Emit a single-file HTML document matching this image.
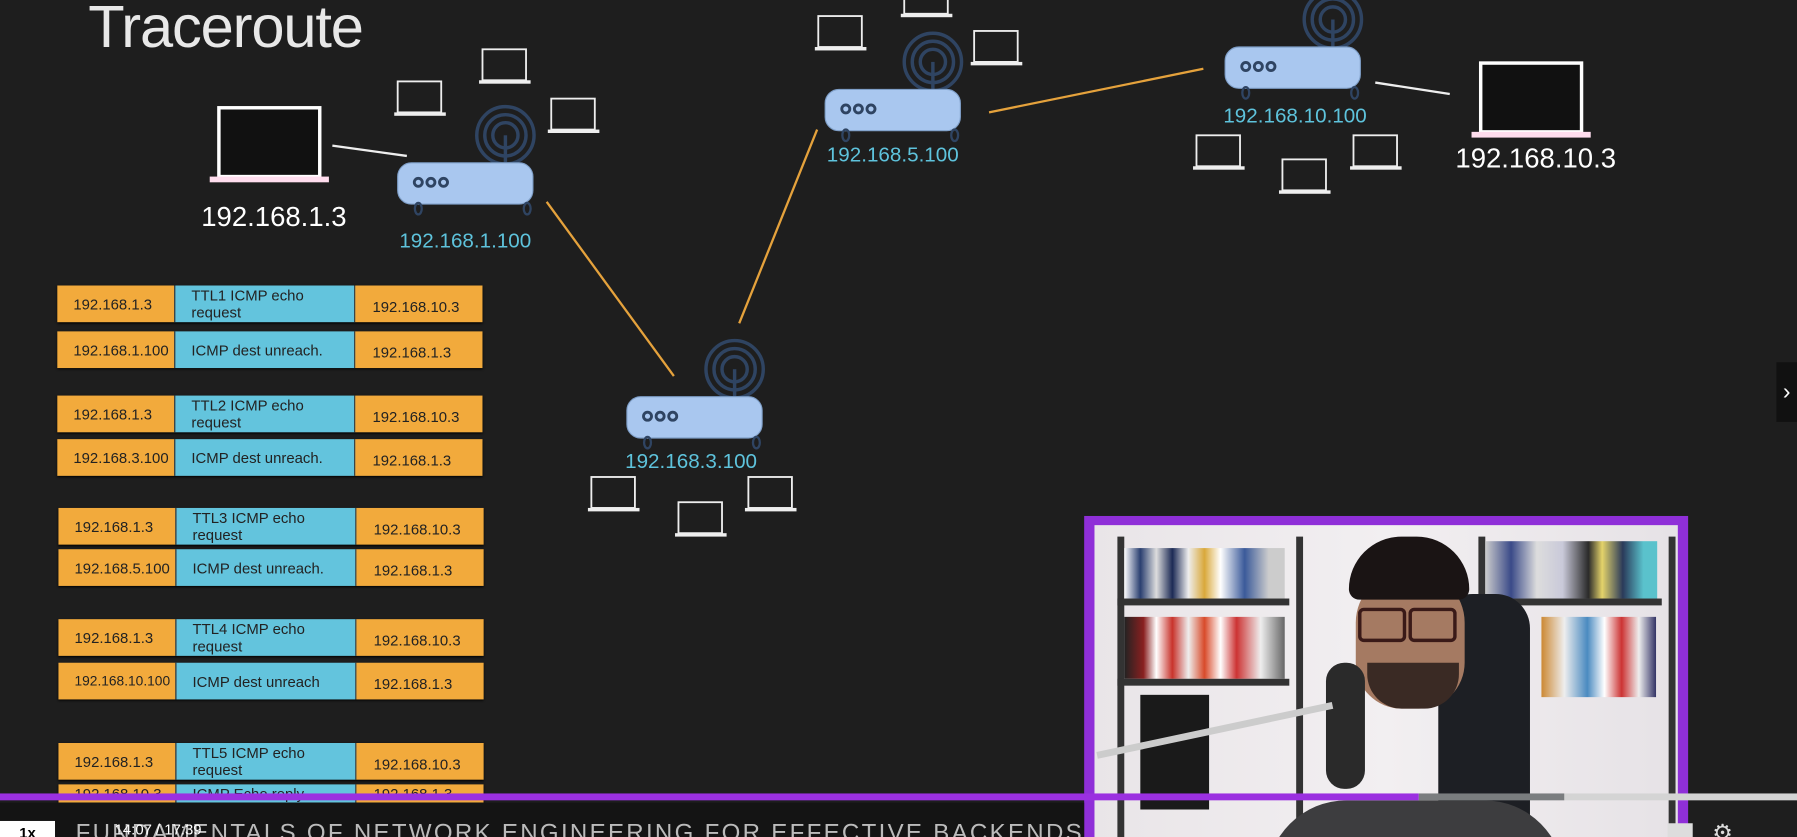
<!DOCTYPE html>
<html><head><meta charset="utf-8"><style>
html,body{margin:0;padding:0;background:#1e1e1e;overflow:hidden;width:1797px;height:837px}
#w{position:absolute;left:0;top:0;width:1568px;height:730px;overflow:hidden;transform-origin:0 0;transform:scale(1.14605,1.1466);background:#1e1e1e;font-family:"Liberation Sans",sans-serif}
.a{position:absolute}
.lbl{position:absolute;color:#5ec3dc;font-size:18px;transform:translateX(-50%);white-space:nowrap}
.wl{position:absolute;color:#fff;font-size:24px;transform:translateX(-50%);white-space:nowrap}
.row{position:absolute;height:32px;display:flex;font-size:13px;color:#222;box-shadow:0 1px 2px #000}
.row div{height:100%;display:flex;align-items:center;box-sizing:border-box}
.o{background:#f2aa3c}
.b{background:#63c4dd;border-left:1px solid #333;border-right:1px solid #333;line-height:15px}
</style></head><body><div id="w">
<div class="a" style="left:77px;top:-6px;font-size:52px;color:#e8e8e8;letter-spacing:-1px">Traceroute</div>
<svg class="a" style="left:0;top:0" width="1568" height="730">
<defs>
<g id="lap"><rect x="3" y="1" width="38" height="27" fill="none" stroke="#eee" stroke-width="1.6"/><rect x="0" y="28" width="45" height="3" fill="#eee"/></g>
<g id="big"><rect x="8" y="2" width="88" height="60" fill="#111" stroke="#fff" stroke-width="3"/><rect x="0" y="62" width="104" height="5" fill="#fde"/></g>
<g id="rt"><circle cx="94" cy="-24" r="25" fill="none" stroke="#2f4462" stroke-width="3"/><circle cx="94" cy="-24" r="18" fill="none" stroke="#2f4462" stroke-width="3"/><circle cx="94" cy="-24" r="11" fill="none" stroke="#2f4462" stroke-width="3"/><line x1="94" y1="-24" x2="94" y2="4" stroke="#2f4462" stroke-width="3"/>
<rect x="0" y="0" width="118" height="36" rx="12" fill="#a9c7ef" stroke="#7f9fc8"/><circle cx="18" cy="17" r="3.5" fill="none" stroke="#2f4462" stroke-width="2.5"/><circle cx="29" cy="17" r="3.5" fill="none" stroke="#2f4462" stroke-width="2.5"/><circle cx="40" cy="17" r="3.5" fill="none" stroke="#2f4462" stroke-width="2.5"/>
<ellipse cx="18" cy="40" rx="3" ry="5" fill="none" stroke="#2f4462" stroke-width="2"/><ellipse cx="113" cy="40" rx="3" ry="5" fill="none" stroke="#2f4462" stroke-width="2"/></g>
</defs>
<line x1="290" y1="127" x2="355" y2="136" stroke="#eee" stroke-width="2"/>
<line x1="477" y1="176" x2="588" y2="328" stroke="#e5a23c" stroke-width="2"/>
<line x1="645" y1="282" x2="713" y2="113" stroke="#e5a23c" stroke-width="2"/>
<line x1="863" y1="98" x2="1050" y2="60" stroke="#e5a23c" stroke-width="2"/>
<line x1="1200" y1="72" x2="1265" y2="82" stroke="#eee" stroke-width="2"/>
<use href="#big" x="183" y="92"/><use href="#big" x="1284" y="53"/>
<use href="#lap" x="344" y="70"/><use href="#lap" x="418" y="42"/><use href="#lap" x="478" y="85"/>
<use href="#lap" x="711" y="13"/><use href="#lap" x="786" y="-16"/><use href="#lap" x="847" y="26"/>
<use href="#lap" x="1041" y="117"/><use href="#lap" x="1116" y="138"/><use href="#lap" x="1178" y="117"/>
<use href="#lap" x="513" y="415"/><use href="#lap" x="589" y="437"/><use href="#lap" x="650" y="415"/>
<use href="#rt" x="347" y="142"/><use href="#rt" x="720" y="78"/><use href="#rt" x="1069" y="41"/><use href="#rt" x="547" y="346"/>
</svg>
<div class="wl" style="left:239px;top:176px">192.168.1.3</div>
<div class="wl" style="left:1340px;top:125px">192.168.10.3</div>
<div class="lbl" style="left:406px;top:200px">192.168.1.100</div>
<div class="lbl" style="left:779px;top:125px">192.168.5.100</div>
<div class="lbl" style="left:1130px;top:91px">192.168.10.100</div>
<div class="lbl" style="left:603px;top:392px">192.168.3.100</div>

<div class="row" style="left:50px;top:249px"><div class="o" style="width:102px;padding-left:14px">192.168.1.3</div><div class="b" style="width:158px;padding-left:14px">TTL1 ICMP echo<br>request</div><div class="o" style="width:111px;padding-left:15px;padding-top:4px">192.168.10.3</div></div>
<div class="row" style="left:50px;top:289px"><div class="o" style="width:102px;padding-left:14px">192.168.1.100</div><div class="b" style="width:158px;padding-left:14px">ICMP dest unreach.</div><div class="o" style="width:111px;padding-left:15px;padding-top:4px">192.168.1.3</div></div>
<div class="row" style="left:50px;top:345px"><div class="o" style="width:102px;padding-left:14px">192.168.1.3</div><div class="b" style="width:158px;padding-left:14px">TTL2 ICMP echo<br>request</div><div class="o" style="width:111px;padding-left:15px;padding-top:4px">192.168.10.3</div></div>
<div class="row" style="left:50px;top:383px"><div class="o" style="width:102px;padding-left:14px">192.168.3.100</div><div class="b" style="width:158px;padding-left:14px">ICMP dest unreach.</div><div class="o" style="width:111px;padding-left:15px;padding-top:4px">192.168.1.3</div></div>
<div class="row" style="left:51px;top:443px"><div class="o" style="width:102px;padding-left:14px">192.168.1.3</div><div class="b" style="width:158px;padding-left:14px">TTL3 ICMP echo<br>request</div><div class="o" style="width:111px;padding-left:15px;padding-top:4px">192.168.10.3</div></div>
<div class="row" style="left:51px;top:479px"><div class="o" style="width:102px;padding-left:14px">192.168.5.100</div><div class="b" style="width:158px;padding-left:14px">ICMP dest unreach.</div><div class="o" style="width:111px;padding-left:15px;padding-top:4px">192.168.1.3</div></div>
<div class="row" style="left:51px;top:540px"><div class="o" style="width:102px;padding-left:14px">192.168.1.3</div><div class="b" style="width:158px;padding-left:14px">TTL4 ICMP echo<br>request</div><div class="o" style="width:111px;padding-left:15px;padding-top:4px">192.168.10.3</div></div>
<div class="row" style="left:51px;top:578px"><div class="o" style="width:102px;padding-left:14px;font-size:12px">192.168.10.100</div><div class="b" style="width:158px;padding-left:14px">ICMP dest unreach</div><div class="o" style="width:111px;padding-left:15px;padding-top:4px">192.168.1.3</div></div>
<div class="row" style="left:51px;top:648px"><div class="o" style="width:102px;padding-left:14px">192.168.1.3</div><div class="b" style="width:158px;padding-left:14px">TTL5 ICMP echo<br>request</div><div class="o" style="width:111px;padding-left:15px;padding-top:4px">192.168.10.3</div></div>
<div class="row" style="left:51px;top:684px;height:16px;overflow:hidden"><div class="o" style="width:102px;padding-left:14px">192.168.10.3</div><div class="b" style="width:158px;padding-left:14px">ICMP Echo reply</div><div class="o" style="width:111px;padding-left:15px">192.168.1.3</div></div>

<!-- webcam -->
<div class="a" style="left:946px;top:450px;width:527px;height:280px;background:#8f2fd8"></div>
<div class="a" style="left:955px;top:458px;width:509px;height:272px;background:linear-gradient(90deg,#e9e5e8,#f2eff1 50%,#e6e2e6);overflow:hidden">
 <div class="a" style="left:20px;top:10px;width:150px;height:280px;border-left:6px solid #333;border-right:6px solid #333"></div>
 <div class="a" style="left:26px;top:20px;width:140px;height:44px;background:linear-gradient(90deg,#fff,#2a3f70 10%,#ddd 20%,#1c2a55 30%,#eee 40%,#d9a83a 50%,#fff 60%,#3b5a9a 75%,#ccc 90%)"></div>
 <div class="a" style="left:20px;top:64px;width:150px;height:6px;background:#333"></div>
 <div class="a" style="left:26px;top:80px;width:140px;height:54px;background:linear-gradient(90deg,#222,#8a2020 12%,#fff 20%,#c8332b 30%,#eee 40%,#d84a2a 50%,#fff 60%,#c33 70%,#eee 85%,#666)"></div>
 <div class="a" style="left:20px;top:134px;width:150px;height:6px;background:#333"></div>
 <div class="a" style="left:40px;top:148px;width:60px;height:100px;background:#1a1a1a"></div>
 <div class="a" style="left:335px;top:10px;width:160px;height:280px;border-left:6px solid #333;border-right:6px solid #333"></div>
 <div class="a" style="left:341px;top:14px;width:150px;height:50px;background:linear-gradient(90deg,#ccc,#3a4a88 15%,#ddd 30%,#c9c9d9 45%,#2a2a2a 60%,#e4d36a 68%,#2a3a5a 80%,#5ac2cc 92%)"></div>
 <div class="a" style="left:335px;top:64px;width:160px;height:6px;background:#333"></div>
 <div class="a" style="left:390px;top:80px;width:100px;height:70px;background:linear-gradient(90deg,#c83,#eee 20%,#4a8ac0 40%,#fff 55%,#c33 70%,#eee 85%,#336)"></div>
 <div class="a" style="left:300px;top:60px;width:80px;height:230px;background:#1d1f24;border-radius:30px 30px 0 0"></div>
 <div class="a" style="left:150px;top:240px;width:260px;height:100px;background:#3d3d3f;border-radius:70px 70px 0 0"></div>
 <div class="a" style="left:228px;top:40px;width:95px;height:120px;background:#a57a62;border-radius:45px 45px 40px 40px"></div>
 <div class="a" style="left:222px;top:10px;width:105px;height:55px;background:#1a1414;border-radius:50px 50px 10px 10px"></div>
 <div class="a" style="left:230px;top:72px;width:36px;height:24px;border:3px solid #3a1a18;border-radius:5px"></div>
 <div class="a" style="left:274px;top:72px;width:36px;height:24px;border:3px solid #3a1a18;border-radius:5px"></div>
 <div class="a" style="left:238px;top:120px;width:80px;height:40px;background:#3a2a24;border-radius:0 0 30px 30px"></div>
 <div class="a" style="left:202px;top:120px;width:34px;height:110px;background:#2a2a2a;border-radius:16px"></div>
 <div class="a" style="left:0px;top:176px;width:210px;height:6px;background:#ccc;transform:rotate(-12deg)"></div>
</div>

<!-- right tab -->
<div class="a" style="left:1550px;top:316px;width:18px;height:52px;background:#111;color:#fff;font-size:20px;line-height:52px;text-align:center">›</div>

<!-- controls -->
<div class="a" style="left:0;top:700px;width:946px;height:30px;background:#141414"></div>
<div class="a" style="left:0;top:692px;width:1238px;height:6px;background:#9b30e0"></div>
<div class="a" style="left:1238px;top:692px;width:127px;height:6px;background:#7a7d7f"></div>
<div class="a" style="left:1365px;top:692px;width:203px;height:6px;background:#d4d4d4"></div>
<div class="a" style="left:0;top:716px;width:48px;height:14px;background:#fff;color:#000;font-size:13px;text-align:center;line-height:22px;font-weight:bold">1x</div>
<div class="a" style="left:66px;top:714px;color:#bbb;font-size:21px;letter-spacing:2px;white-space:nowrap;line-height:26px">FUNDAMENTALS OF NETWORK ENGINEERING FOR EFFECTIVE BACKENDS</div>
<div class="a" style="left:100px;top:716px;color:#fff;font-size:13px;white-space:nowrap">14:07 / 17:39</div>
<div class="a" style="left:1455px;top:718px;width:22px;height:12px;background:#ddd"></div>
<div class="a" style="left:1494px;top:714px;color:#ddd;font-size:20px">⚙</div>
</div></body></html>
